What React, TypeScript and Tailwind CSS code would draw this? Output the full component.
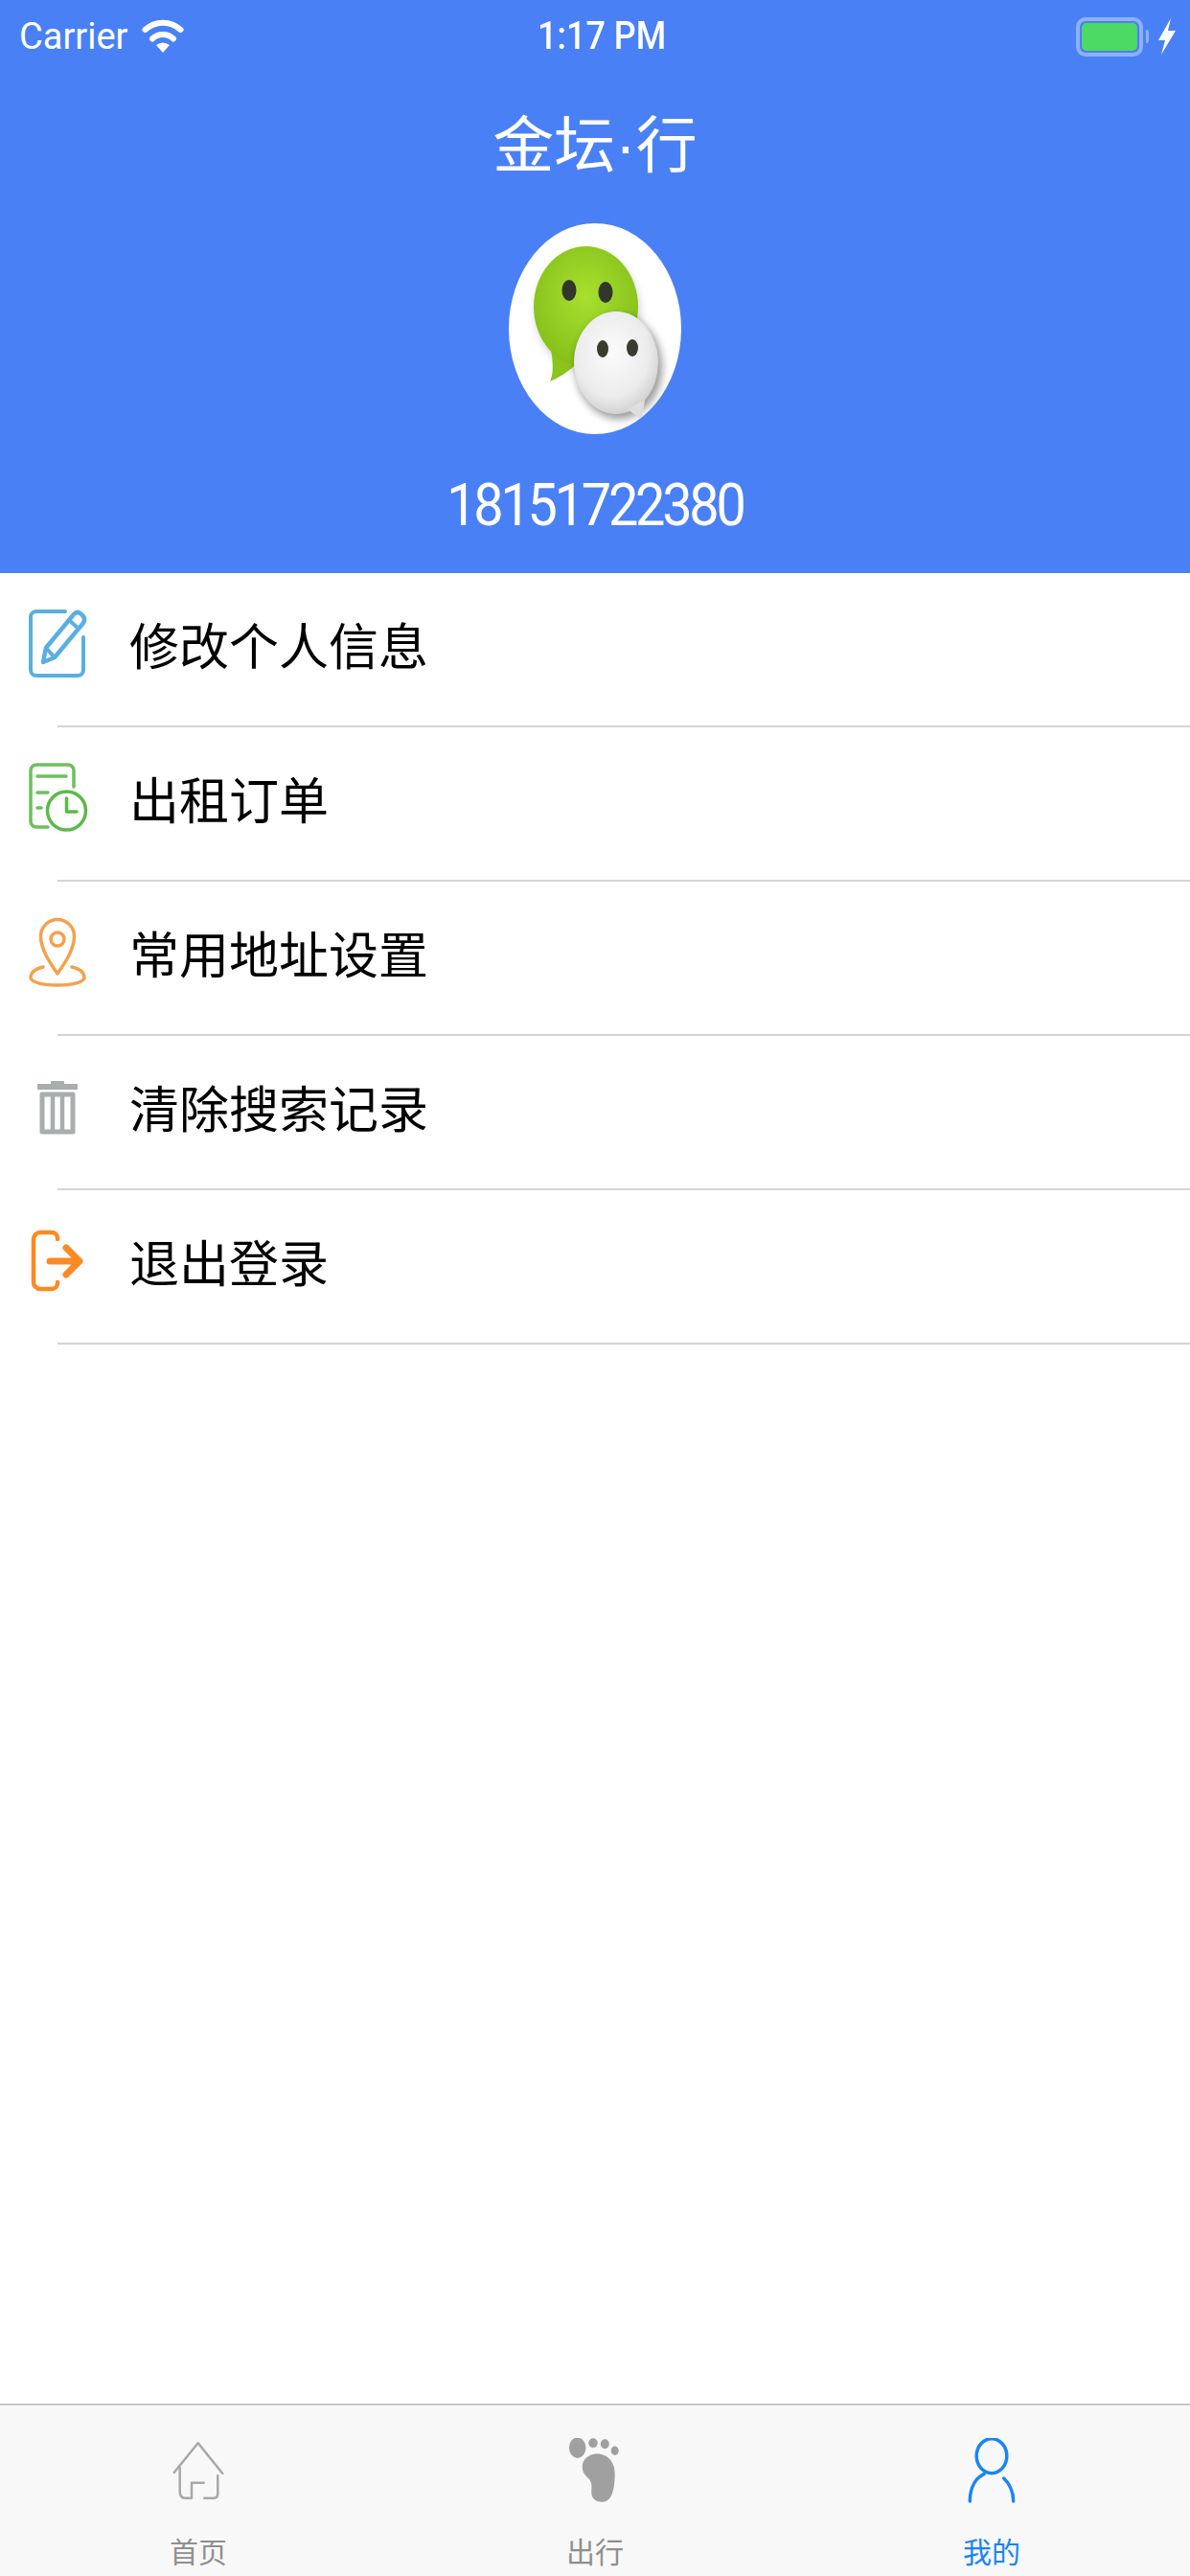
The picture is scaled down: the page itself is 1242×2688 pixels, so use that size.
import React from 'react';

const menuItems = [
  { label: '修改个人信息', icon: <EditIcon /> },
  { label: '出租订单', icon: <OrderIcon /> },
  { label: '常用地址设置', icon: <PinIcon /> },
  { label: '清除搜索记录', icon: <TrashIcon /> },
  { label: '退出登录', icon: <LogoutIcon /> },
];

function EditIcon() {
  return (
    <svg viewBox="0 0 90 90" className="w-[90px] h-[90px]" fill="none" stroke="#5aaee2" strokeWidth="4" strokeLinejoin="round" strokeLinecap="round">
      <path d="M53 11 H23 a6 6 0 0 0-6 6 V72 a6 6 0 0 0 6 6 H66 a6 6 0 0 0 6-6 V38" />
      <path d="M30 64 L33 49 L62 14 Q66 10 70 14 Q75 18 72 23 L42 59 Z" strokeWidth="4.5" />
      <path d="M33 49 L42 59 M57 20 L67 29" />
    </svg>
  );
}

function OrderIcon() {
  return (
    <svg viewBox="0 0 90 90" className="w-[90px] h-[90px]" fill="none" stroke="#6cc05c" strokeWidth="3.5" strokeLinecap="round" strokeLinejoin="round">
      <path d="M62 33 V16 a6 6 0 0 0-6-6 H23 a6 6 0 0 0-6 6 V69 a6 6 0 0 0 6 6 H35" />
      <path d="M24 22 H54 M24 39 H35 M24 55 H28" />
      <circle cx="54.5" cy="58" r="20" stroke="#5cb84a" />
      <path d="M54.5 45 V59 H65" stroke="#5cb84a" />
    </svg>
  );
}

function PinIcon() {
  return (
    <svg viewBox="0 0 90 90" className="w-[90px] h-[90px]" fill="none" stroke="#f3a14e" strokeWidth="3.5" strokeLinejoin="round" strokeLinecap="round">
      <path d="M45 67 C38 57 27.5 42 27.5 28 A17.5 17.5 0 0 1 62.5 28 C62.5 42 52 57 45 67 Z" />
      <circle cx="45" cy="31" r="7" />
      <path d="M30 60 C22 62 17 66 17 71 C17 76 30 79 45 79 C60 79 73 76 73 71 C73 66 68 62 60 60" />
    </svg>
  );
}

function TrashIcon() {
  return (
    <svg viewBox="0 0 90 90" className="w-[90px] h-[90px]" fill="none">
      <rect x="24" y="21" width="42" height="6" rx="1" fill="#a9adad" />
      <rect x="38" y="18" width="14" height="4" rx="1" fill="#a9adad" />
      <rect x="29" y="32" width="32" height="39" stroke="#a9adad" strokeWidth="5" strokeLinejoin="round" />
      <path d="M40 32 V71 M50 32 V71" stroke="#a9adad" strokeWidth="4.5" />
    </svg>
  );
}

function LogoutIcon() {
  return (
    <svg viewBox="0 0 90 90" className="w-[90px] h-[90px]" fill="none" stroke="#fb8a24" strokeLinecap="round" strokeLinejoin="round">
      <path d="M45 22 V21 a6 6 0 0 0-6-6 H27 a7 7 0 0 0-7 7 V67 a7 7 0 0 0 7 7 H39 a6 6 0 0 0 6-6 V67" strokeWidth="4.5" />
      <path d="M37 45 H66 M54 31 L68 45 L54 59" strokeWidth="7" />
    </svg>
  );
}

function WeChatAvatar() {
  return (
    <div className="w-[180px] h-[220px] rounded-[50%] bg-white overflow-hidden">
      <svg viewBox="0 0 180 220" className="w-full h-full">
        <defs>
          <radialGradient id="greenFill" cx="50%" cy="42%" r="60%">
            <stop offset="0%" stopColor="#a9e02f" />
            <stop offset="100%" stopColor="#84bf1a" />
          </radialGradient>
          <radialGradient id="whiteFill" cx="45%" cy="40%" r="62%">
            <stop offset="0%" stopColor="#fbfbfb" />
            <stop offset="70%" stopColor="#ececec" />
            <stop offset="100%" stopColor="#cfcfcf" />
          </radialGradient>
          <filter id="softBlur" x="-30%" y="-30%" width="160%" height="160%">
            <feGaussianBlur stdDeviation="4" />
          </filter>
        </defs>
        <ellipse cx="82" cy="92" rx="55" ry="63" fill="#000" opacity="0.16" filter="url(#softBlur)" />
        <path d="M44 132 Q48 155 43 165 Q56 160 72 146 Z" fill="#8ac41c" />
        <ellipse cx="80.5" cy="87" rx="54.5" ry="63" fill="url(#greenFill)" />
        <ellipse cx="63" cy="70" rx="7.5" ry="11" fill="#33362a" />
        <ellipse cx="101" cy="72" rx="7.5" ry="11" fill="#33362a" />
        <ellipse cx="115" cy="150" rx="45" ry="54" fill="#000" opacity="0.4" filter="url(#softBlur)" />
        <ellipse cx="112" cy="145.5" rx="44" ry="53.5" fill="url(#whiteFill)" />
        <path d="M124 194 L139 205 L142 184 Z" fill="#dedede" />
        <ellipse cx="98" cy="131" rx="6" ry="9" fill="#3a3c30" />
        <ellipse cx="129" cy="130" rx="6" ry="9" fill="#3a3c30" />
      </svg>
    </div>
  );
}

function HomeTabIcon() {
  return (
    <svg viewBox="0 0 60 72" className="w-[60px] h-[72px]" fill="none" stroke="#a8a8a8" strokeWidth="2.5" strokeLinecap="round" strokeLinejoin="round">
      <path d="M4.7 36 L29.7 5.3 L55.3 37" />
      <path d="M10.7 31 V56 Q10.7 62.7 16.3 62.7 H23 V46.7 H35.7" />
      <path d="M36.3 62.7 H46.3 Q50.3 62.7 50.3 57.7 V39.3" />
    </svg>
  );
}

function FootTabIcon() {
  return (
    <svg viewBox="0 0 60 72" className="w-[60px] h-[72px]" fill="#a0a0a0">
      <ellipse cx="11.7" cy="10.3" rx="8.8" ry="10.7" />
      <ellipse cx="28" cy="5.3" rx="4.7" ry="5" />
      <ellipse cx="40.3" cy="6.3" rx="4.5" ry="5" />
      <ellipse cx="50.7" cy="13.3" rx="4" ry="4.7" />
      <path d="M32 16.5 C44 16.5 51 26 50.7 38 C50.5 50 49 66.7 37.5 66.7 C30 66.7 26 62 26.3 57 C26.5 50 27 47 24 43 C20 39 16.7 36 16.7 30 C16.7 22 24 16.5 32 16.5 Z" />
    </svg>
  );
}

function PersonTabIcon() {
  return (
    <svg viewBox="0 0 60 72" className="w-[60px] h-[72px]" fill="none" stroke="#1a84f5" strokeWidth="3.5" strokeLinecap="round">
      <ellipse cx="30" cy="18.7" rx="15.8" ry="18" />
      <path d="M7.3 66 C7.3 52 13 42 22 37.7" />
      <path d="M42.7 42 C48 47 52.7 56 52.7 66" />
    </svg>
  );
}

export default function App() {
  return (
    <div className="w-[1242px] h-[2688px] bg-white flex flex-col overflow-hidden font-['Noto_Sans_CJK_SC','Liberation_Sans',sans-serif]">
      {/* Header */}
      <div className="h-[598px] bg-[#4a80f5] text-white flex flex-col items-center shrink-0">
        <div className="w-full h-[76px] grid grid-cols-3 items-center font-['Roboto',sans-serif]">
          <div className="flex items-center pl-[20px]">
            <span className="text-[38px] leading-none">Carrier</span>
            <svg viewBox="0 0 44 40" className="w-[44px] h-[40px] ml-[15px]" fill="none" stroke="white" strokeWidth="6" strokeLinecap="round">
              <path d="M3.5 13 A27 27 0 0 1 40.5 13" />
              <path d="M11 22.5 A16 16 0 0 1 33 22.5" />
              <path d="M22 37 L15 29 Q22 24 29 29 Z" fill="white" stroke="none" />
            </svg>
          </div>
          <div className="text-center pl-4 text-[40px] font-medium leading-none scale-x-90">1:17 PM</div>
          <div className="flex items-center justify-end pr-[15px]">
            <div className="w-[70px] h-[41px] rounded-[10px] border-[4px] border-[#8fb0f9] p-[2px]">
              <div className="w-full h-full rounded-[5px] bg-[#4cd964]" />
            </div>
            <div className="w-[3px] h-[14px] ml-[3px] rounded-r-full bg-[#8fb0f9]" />
            <svg viewBox="0 0 18 38" className="w-[18px] h-[38px] ml-[10px]" fill="white">
              <path d="M13 0 L0 23 H7 L3 38 L18 13 H10 Z" />
            </svg>
          </div>
        </div>
        <h1 className="mt-[33px] h-[74px] text-[64px] leading-[74px] font-normal">
          金坛<span className="font-['Liberation_Sans',sans-serif]">·</span>行
        </h1>
        <div className="mt-[50px]">
          <WeChatAvatar />
        </div>
        <div className="mt-[44px] text-[62px] leading-[60px] font-normal font-['Roboto',sans-serif] tracking-[-3.6px] scale-x-90">18151722380</div>
      </div>

      {/* Menu */}
      <div className="flex flex-col">
        {menuItems.map((item) => (
          <div key={item.label}>
            <div className="h-[159px] pb-3 flex items-center">
              <div className="w-[135px] pl-[15px] shrink-0">{item.icon}</div>
              <span className="text-[52px] leading-none text-black">{item.label}</span>
            </div>
            <div className="ml-[60px] h-[2px] bg-[#d4d4d4]" />
          </div>
        ))}
      </div>

      {/* Tab bar */}
      <div className="mt-auto h-[180px] border-t-2 border-[#c8c8c8] bg-[#f8f8f8] grid grid-cols-3 shrink-0">
        <div className="flex flex-col items-center pt-[34px]">
          <HomeTabIcon />
          <span className="mt-[27px] text-[30px] leading-[36px] text-[#8f8f8f]">首页</span>
        </div>
        <div className="flex flex-col items-center pt-[34px]">
          <FootTabIcon />
          <span className="mt-[27px] text-[30px] leading-[36px] text-[#8f8f8f]">出行</span>
        </div>
        <div className="flex flex-col items-center pt-[34px]">
          <PersonTabIcon />
          <span className="mt-[27px] text-[30px] leading-[36px] text-[#1a84f5]">我的</span>
        </div>
      </div>
    </div>
  );
}
